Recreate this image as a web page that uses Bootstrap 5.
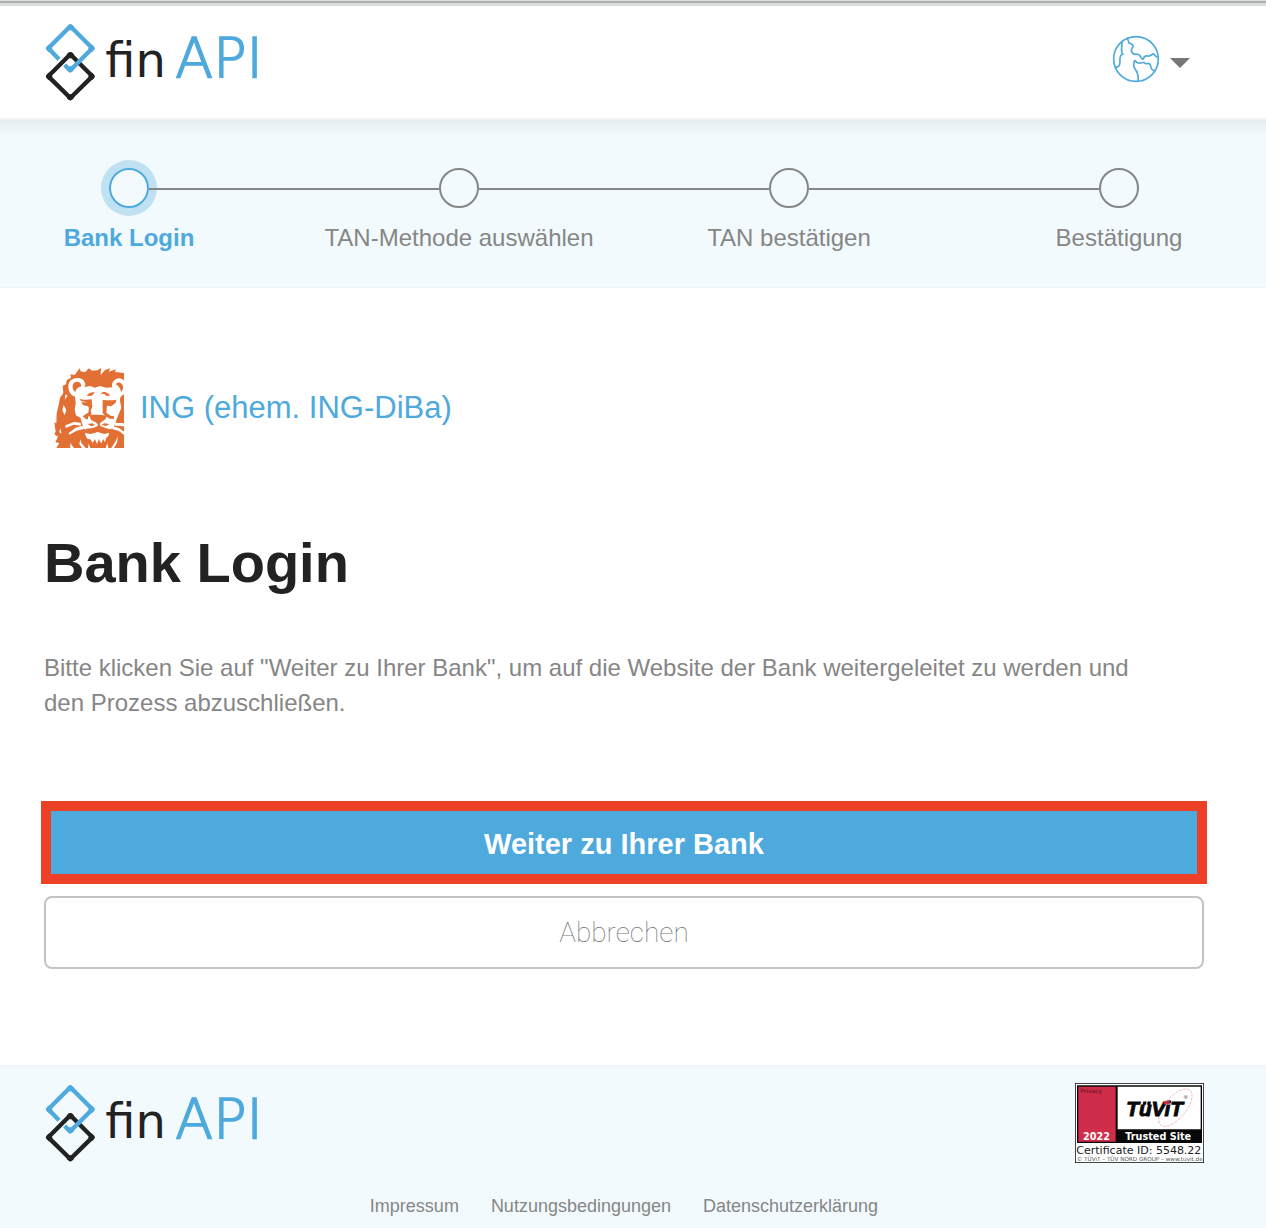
<!DOCTYPE html>
<html lang="de">
<head>
<meta charset="utf-8">
<meta name="viewport" content="width=device-width, initial-scale=1">
<title>finAPI – Bank Login</title>
<link href="https://cdn.jsdelivr.net/npm/bootstrap@5.3.0/dist/css/bootstrap.min.css" rel="stylesheet">
<style>
  :root { --fin-blue: #4ea9dd; --fin-ink: #222; --fin-grey: #868686; --fin-tint: #f2fafd; }
  body { font-family: "Liberation Sans", Arial, sans-serif; color: var(--fin-grey); background: #fff; }
  .topstrip { height: 6px; background: linear-gradient(#dcdedd 0 1px, #adb1ae 1px 3px, #dcdedd 3px); }
  .gutter { padding-left: 44px; padding-right: 62px; }
  .brandbar { height: 112px; padding-top: 16px; }
  .logo { display: block; width: 240px; height: 80px; }
  .lang { margin: 13px 14px 0 0; gap: 10px; }
  .caret { margin-top: 8px; }
  .steps-band { background: linear-gradient(#e6edf0, var(--fin-tint) 16px); border-top: 2px solid #eff3f5; border-bottom: 1px solid #f2f5f7; height: 170px; padding-top: 48px; overflow: hidden; }
  .steps { margin: 0 -18px 0 -36px; }
  .step { flex: 1 1 0; font-size: 24px; line-height: 28px; }
  .rail { flex: 1 1 0; height: 2px; margin-top: 2px; background: var(--fin-grey); }
  .step:first-child .rail:first-child, .step:last-child .rail:last-child { visibility: hidden; }
  .dot { width: 40px; height: 40px; border: 2px solid var(--fin-grey); border-radius: 50%; }
  .step-label { margin-top: 16px; }
  .step.current { color: var(--fin-blue); font-weight: 700; }
  .step.current .dot { border-color: var(--fin-blue); box-shadow: 0 0 0 8px #c0e1f1; }
  main { padding-top: 80px; padding-bottom: 96px; }
  .bank { gap: 16px; font-size: 31px; color: var(--fin-blue); }
  h1 { font-size: 56px; line-height: 64px; font-weight: 700; color: var(--fin-ink); margin: 83px 0 55px; }
  .intro { font-size: 24px; line-height: 35px; margin: 0 0 81px; padding-right: 36px; }
  .go { margin: 0 -3px 12px; border: 10px solid #ec4126; border-radius: 0; background: var(--fin-blue); color: #fff; font-size: 29px; font-weight: 700; line-height: 35px; padding: 16px 14px 12px; }
  .go:hover { background: #3d98cc; border-color: #ec4126; color: #fff; }
  .cancel { border: 2px solid #c3c3c3; border-radius: 8px; background: #fff; color: #777; font-family: Roboto, "Liberation Sans", sans-serif; font-weight: 100; font-size: 28px; line-height: 35px; padding: 17px; }
  footer { background: var(--fin-tint); border-top: 1px solid #edf3f5; padding-top: 17px; padding-bottom: 11px; }
  .footlinks { gap: 32px; margin-top: 32px; font-size: 18px; line-height: 22px; }
  .footlinks a { color: var(--fin-grey); text-decoration: none; }
</style>
<script src="https://cdn.jsdelivr.net/npm/bootstrap@5.3.0/dist/js/bootstrap.bundle.min.js"></script>
</head>
<body>
<div class="topstrip"></div>
<header class="brandbar gutter d-flex justify-content-between align-items-start">
  <a href="#" aria-label="finAPI">
    <svg class="logo" viewBox="42 66 720 240">
      <g id="finlogo">
        <g fill="none" stroke-width="13" stroke-linejoin="round">
          <path stroke="#222" d="M121 163L187 229L121 294L55 229Z"/>
          <path stroke="#222" stroke-width="16" d="M115 169L121 164L127 169M180 223L186 229L180 235M127 288L121 293L115 288M62 235L56 229L62 223"/>
          <path stroke="#4ea9dd" d="M87 178L55 145L121 79L187 145L121 211L104 195"/>
          <path stroke="#4ea9dd" stroke-width="16" d="M115 86L121 81L127 86M180 139L186 145L180 151M127 204L121 209L115 204M62 151L56 145L62 139"/>
        </g>
        <text x="226" y="230" font-family="DejaVu Sans, sans-serif" font-size="144" fill="#222">fin</text>
        <text x="436" y="230" font-family="DejaVu Sans, sans-serif" font-size="166" font-weight="200" fill="#4ea9dd" stroke="#4ea9dd" stroke-width="5">API</text>
      </g>
    </svg>
  </a>
  <button type="button" class="lang btn border-0 p-0 d-flex align-items-center" aria-label="Sprache">
    <svg width="48" height="48" viewBox="66 45 144 144" fill="none" stroke="#4ea9dd" stroke-width="5" stroke-linejoin="round" stroke-linecap="round">
      <circle cx="138" cy="117" r="67"/>
      <path d="M97 66C94 72 97 77 95 83C93 89 97 94 95 98L99 102L93 105C90 111 89 116 90 121C89 127 91 132 87 137C85 141 80 140 77 143"/>
      <path d="M113 54C111 61 117 61 116 68C121 71 127 71 129 76C130 82 123 87 124 93C126 100 131 103 137 103C143 101 150 105 153 112C156 117 158 119 160 116C162 110 166 107 173 108C180 110 185 104 190 101C193 104 195 109 203 112"/>
      <path d="M135 122C140 125 140 130 147 129C154 131 155 126 162 128C166 133 172 130 178 131C185 137 180 143 186 148L194 154M135 122C130 123 133 130 131 135C130 141 134 145 137 150C142 153 140 158 143 163C146 169 144 176 145 183"/>
    </svg>
    <svg class="caret" width="20" height="10" viewBox="0 0 20 10"><path fill="#777" d="M0 0H20L10 10Z"/></svg>
  </button>
</header>

<nav class="steps-band" aria-label="Fortschritt">
  <ol class="steps list-unstyled d-flex text-center">
    <li class="step current" aria-current="step"><div class="d-flex align-items-center"><span class="rail"></span><span class="dot"></span><span class="rail"></span></div><div class="step-label">Bank Login</div></li>
    <li class="step"><div class="d-flex align-items-center"><span class="rail"></span><span class="dot"></span><span class="rail"></span></div><div class="step-label">TAN-Methode auswählen</div></li>
    <li class="step"><div class="d-flex align-items-center"><span class="rail"></span><span class="dot"></span><span class="rail"></span></div><div class="step-label">TAN bestätigen</div></li>
    <li class="step"><div class="d-flex align-items-center"><span class="rail"></span><span class="dot"></span><span class="rail"></span></div><div class="step-label">Bestätigung</div></li>
  </ol>
</nav>

<main class="gutter">
  <div class="bank d-flex align-items-center">
    <svg width="80" height="80" viewBox="12 39 240 240" aria-hidden="true">
      <path fill="#e27035" d="M252 279H49L58 264L46 262L54 245L43 238L47 230L43 202L49 205L50 175L56 150L60 128L70 114L68 92L78 88L80 76L93 68L91 58L104 60L119 40L122 49L135 52L147 40L156 47L172 46L183 39L182 60L195 45L211 40L206 50L228 43L225 51L252 54Z"/>
      <g fill="#fff">
        <path d="M85 94C85 77 98 69 112 69C126 69 135 77 136 89L134 97L150 93L165 98L180 93L198 98L217 97C213 82 225 71 237 70C245 71 250 74 252 77V118C243 124 239 127 240 137L244 158L235 180L228 198L222 215L204 229L187 224L173 216L151 229L132 222L126 205L122 189L108 181L104 164L107 145L105 125C92 122 85 110 85 94Z"/>
        <path d="M77 118L83 122L74 134ZM71 150L79 165L74 181L67 166Z"/>
        <path d="M122 203L102 201L76 211L77 219L101 209L123 212ZM127 212L107 218L86 234L88 239L110 227L134 221ZM224 203L252 205V214L225 212ZM218 214L237 219L252 230V239L236 228L214 221Z"/>
        <path d="M135 233L153 237L173 231L193 237L208 233L205 243L198 250L195 262L190 252L184 265L176 253L171 267L165 253L158 263L151 253L143 252L137 243Z"/>
        <path d="M90 264L102 279H91ZM121 253L124 264L137 279H126L118 267ZM146 266L151 279H144ZM234 244L231 263L222 279H214L226 260ZM62 220L58 231L64 237ZM202 265L197 279H205Z"/>
      </g>
      <g fill="#e27035">
        <path d="M98 95C98 84 105 80 112 80C121 81 124 87 124 94C113 97 107 104 106 111C101 107 98 102 98 95ZM228 88C231 81 241 81 246 88C252 96 249 105 243 112C243 102 237 94 228 88Z"/>
        <path d="M140 123C147 112 157 110 164 113L155 122ZM182 118L188 111H196L208 118L209 123L198 122L192 116Z"/>
        <path d="M118 131C130 136 142 134 155 133L157 156L152 166L155 178L144 186V193H138L132 187L127 186L137 177L145 173L147 158L142 153L130 151L123 142L143 142L123 138Z"/>
        <path d="M188 134C203 137 216 136 229 134L227 143L214 154L201 152L199 173L212 182L222 184V191H209L196 183L188 174Z"/>
        <path d="M148 181C164 179 184 179 200 182L197 192L181 203L178 211L173 207L167 202L153 195Z"/>
        <path d="M173 203V213L159 219L137 221L139 226L137 235L155 234L173 228L192 234L209 233L212 223L198 220L180 212L178 203Z"/>
        <path d="M143 207L157 205L165 210L154 214ZM184 210L193 205L208 207L199 213Z"/>
      </g>
    </svg>
    <span>ING (ehem. ING-DiBa)</span>
  </div>
  <h1>Bank Login</h1>
  <p class="intro">Bitte klicken Sie auf "Weiter zu Ihrer Bank", um auf die Website der Bank weitergeleitet zu werden und den Prozess abzuschließen.</p>
  <div class="d-grid">
    <button type="button" class="btn go">Weiter zu Ihrer Bank</button>
    <button type="button" class="btn cancel">Abbrechen</button>
  </div>
</main>

<footer class="gutter">
  <div class="d-flex justify-content-between">
    <svg class="logo" viewBox="42 66 720 240" role="img" aria-label="finAPI"><use href="#finlogo"/></svg>
    <svg width="129" height="80" viewBox="30 24 387 240" role="img" aria-label="TÜViT Trusted Site">
      <rect x="31" y="25" width="385" height="238" fill="#fff" stroke="#222" stroke-width="3"/>
      <path fill="#080808" d="M36 31H411V204H36Z"/>
      <path fill="#cf2d4a" d="M40 35H152V200H40Z"/>
      <path fill="#fff" d="M158 35H407V163H158Z"/>
      <ellipse cx="331" cy="98" rx="68" ry="32" transform="rotate(-50 331 98)" fill="none" stroke="#e8a0ac" stroke-width="2" stroke-dasharray="9 3"/>
      <g font-family="DejaVu Sans, sans-serif">
        <text x="46" y="55" font-size="18" fill="#501020">Privacy</text>
        <text x="184" y="124" font-size="62" font-family="Liberation Sans, sans-serif" font-weight="700" font-style="italic" fill="#080808" stroke="#080808" stroke-width="3">TüViT</text>
        <path d="M300 77H315L311 88H296Z" fill="#cf2d4a"/>
        <text x="354" y="71" font-size="16" fill="#666">®</text>
        <text x="54" y="195" font-size="29" font-weight="700" fill="#fff">2022</text>
        <text x="181" y="195" font-size="29" font-weight="700" fill="#fff">Trusted Site</text>
        <text x="34" y="237" font-size="33" fill="#222">Certificate ID: 5548.22</text>
        <text x="35" y="259" font-size="17" fill="#555">© TÜViT – TÜV NORD GROUP – www.tuvit.de</text>
      </g>
    </svg>
  </div>
  <nav class="footlinks d-flex justify-content-center">
    <a href="#">Impressum</a>
    <a href="#">Nutzungsbedingungen</a>
    <a href="#">Datenschutzerklärung</a>
  </nav>
</footer>
</body>
</html>
